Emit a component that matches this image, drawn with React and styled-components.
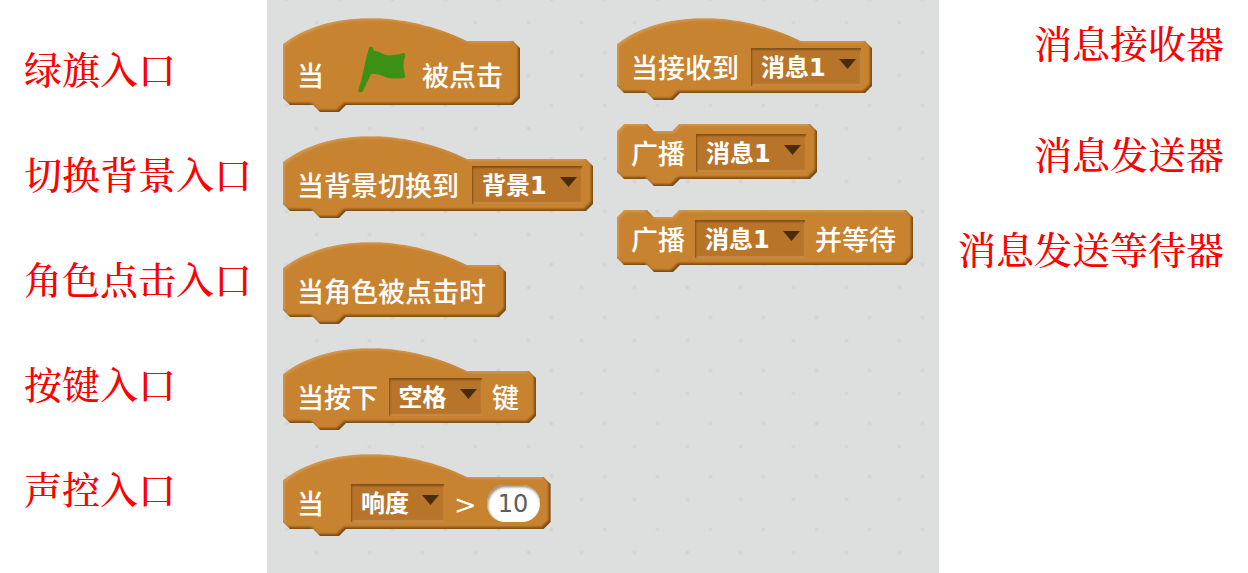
import React from "react";
import styled, { createGlobalStyle, css } from "styled-components";

const GlobalStyle = createGlobalStyle`
  * { box-sizing: border-box; }
  body {
    margin: 0;
    background: #ffffff;
    font-family: "DejaVu Sans", "Noto Sans CJK SC", sans-serif;
  }
`;

/* Outline of the curved cap, sampled from a cubic curve. */
const CAP = Array.from({ length: 33 }, (_, i) => {
  const t = i / 32;
  const u = 1 - t;
  const at = (a, b, c, d) =>
    u * u * u * a + 3 * u * u * t * b + 3 * u * t * t * c + t * t * t * d;
  return `${at(0, 44, 120, 184).toFixed(2)}px ${at(26, -8, -8, 23).toFixed(2)}px`;
}).join(", ");

const HAT_TOP = `${CAP}, calc(100% - 7px) 23px, 100% 30px`;
const STACK_TOP =
  "0 7px, 7px 0, 30px 0, 37px 7px, 55px 7px, 62px 0, calc(100% - 7px) 0, 100% 7px";
const BOTTOM =
  "100% calc(100% - 14px), calc(100% - 7px) calc(100% - 7px), 63px calc(100% - 7px), 56px 100%, 37px 100%, 30px calc(100% - 7px), 7px calc(100% - 7px), 0 calc(100% - 14px)";

const Page = styled.div`
  display: grid;
  grid-template-columns: 267px minmax(0, 1fr) 309px;
  min-height: 100vh;
`;

const Notes = styled.ul`
  list-style: none;
  margin: 0;
  display: flex;
  flex-direction: column;
  gap: ${(p) => p.$gap}px;
  padding: ${(p) => p.$top}px 24px 0;
  align-items: ${(p) => (p.$end ? "flex-end" : "flex-start")};
`;

const Note = styled.li`
  font-family: "Noto Serif CJK SC", "Noto Sans CJK SC", serif;
  font-size: 38px;
  font-weight: 500;
  line-height: 45px;
  color: #ff0000;
  white-space: nowrap;
  margin-top: ${(p) => (p.$apart ? 16 : 0)}px;
`;

const Canvas = styled.main`
  display: grid;
  grid-template-columns: 334px minmax(0, 1fr);
  padding: 18px 0 18px 16px;
  background-color: #dddfdf;
  background-image: radial-gradient(circle, #d2d4d6 1px, transparent 3px),
    radial-gradient(circle, #d2d4d6 1px, transparent 3px);
  background-size: 53px 53px;
  background-position: 23px 49px, 46px 26px;
`;

const Stack = styled.section`
  display: flex;
  flex-direction: column;
  align-items: flex-start;
  gap: 24px;
`;

const BlockRoot = styled.div`
  position: relative;
  z-index: 0;
  display: flex;
  align-items: center;
  justify-content: space-between;
  gap: 10px;
  min-width: ${(p) => p.$width}px;
  padding-left: 14px;
  padding-right: ${(p) => (p.$fieldLast ? 11 : 17)}px;
  ${(p) =>
    p.$hat
      ? css`
          height: ${p.$tall ? 94 : 82}px;
          padding-top: ${p.$tall ? 27 : 23}px;
          padding-bottom: 7px;
        `
      : css`
          height: 62px;
          padding-top: 2px;
          padding-bottom: 7px;
        `}
`;

const Shape = styled.span`
  position: absolute;
  inset: 0;
  z-index: -1;
  filter: url(#bevel);

  &::before {
    content: "";
    position: absolute;
    inset: 0;
    background: #c88330;
    clip-path: polygon(${(p) => (p.$hat ? HAT_TOP : STACK_TOP)}, ${BOTTOM});
  }
`;

const Word = styled.span`
  flex: none;
  min-width: ${(p) => (p.$wide ? 44 : 0)}px;
  padding-top: 3px;
  font-size: 27px;
  font-weight: 500;
  line-height: 27px;
  color: #ffffff;
  white-space: nowrap;
`;

const Flag = styled.svg`
  flex: none;
  width: 48px;
  height: 47px;
  margin: 0 5px 12px;
`;

const Picker = styled.span`
  position: relative;
  flex: none;
  display: flex;
  width: ${(p) => (p.$long ? 110 : 93)}px;
`;

const Select = styled.select`
  appearance: none;
  width: 100%;
  height: 38px;
  margin: 0;
  padding: 2px 24px 0 10px;
  border: 0;
  border-radius: 0;
  background: #b8752a;
  box-shadow: inset 1px 2px 2px #80501b, inset -1px -2px 1px #c58a47;
  color: #ffffff;
  font-family: inherit;
  font-size: 24px;
  font-weight: 700;
  line-height: 32px;
`;

const Caret = styled.svg`
  position: absolute;
  right: 5px;
  top: 11px;
  width: 17px;
  height: 10px;
  pointer-events: none;
`;

const NumberField = styled.input`
  flex: none;
  width: 53px;
  height: 37px;
  margin: 0;
  padding: 2px 0 0;
  border: 0;
  border-radius: 18px;
  background: #ffffff;
  box-shadow: inset 1px 2px 3px #8c8378;
  color: #5b5d60;
  font-family: inherit;
  font-size: 24px;
  text-align: center;
`;

const Defs = styled.svg`
  position: absolute;
  width: 0;
  height: 0;
`;

function BevelFilter() {
  return (
    <Defs aria-hidden="true">
      <filter id="bevel" x="-5%" y="-10%" width="110%" height="120%" colorInterpolationFilters="sRGB">
        <feGaussianBlur in="SourceAlpha" stdDeviation="1" result="soft" />
        <feOffset in="soft" dx="-2" dy="-2" result="up" />
        <feOffset in="soft" dx="2" dy="2" result="down" />
        <feFlood floodColor="#7c4a12" />
        <feComposite in2="up" operator="out" result="shade" />
        <feFlood floodColor="#d6a468" floodOpacity="0.6" />
        <feComposite in2="down" operator="out" result="light" />
        <feMerge result="edges">
          <feMergeNode in="SourceGraphic" />
          <feMergeNode in="light" />
          <feMergeNode in="shade" />
        </feMerge>
        <feComposite in="edges" in2="SourceAlpha" operator="in" />
      </filter>
    </Defs>
  );
}

function Block({ children, hat, tall, width, fieldLast }) {
  return (
    <BlockRoot $hat={hat} $tall={tall} $width={width} $fieldLast={fieldLast}>
      <Shape $hat={hat} />
      {children}
    </BlockRoot>
  );
}

function Dropdown({ value, label, long }) {
  return (
    <Picker $long={long}>
      <Select aria-label={label} defaultValue={value}>
        <option>{value}</option>
      </Select>
      <Caret viewBox="0 0 17 10" aria-hidden="true">
        <path d="M0 0H17L8.5 10Z" fill="#4a2c0b" />
      </Caret>
    </Picker>
  );
}

const ENTRIES = ["绿旗入口", "切换背景入口", "角色点击入口", "按键入口", "声控入口"];

export default function App() {
  return (
    <Page>
      <GlobalStyle />
      <BevelFilter />
      <Notes $top={45} $gap={60}>
        {ENTRIES.map((text) => (
          <Note key={text}>{text}</Note>
        ))}
      </Notes>
      <Canvas>
        <Stack>
          <Block hat tall width={237}>
            <Word $wide>当</Word>
            <Flag viewBox="0 0 48 47" role="img" aria-label="绿旗">
              <path
                d="M11 2Q12 -1 15 2L16 5C22 4 26 11 35 9Q41 9 45 7Q48 7 47 10C45 16 45 22 47 29Q48 32 45 32C38 33 31 33 25 30Q18 27 13 28L5 45Q4 47 1 46Q0 45 1 42C5 30 7 15 11 2Z"
                fill="#3c9014"
              />
            </Flag>
            <Word>被点击</Word>
          </Block>
          <Block hat width={310} fieldLast>
            <Word>当背景切换到</Word>
            <Dropdown long value="背景1" label="背景" />
          </Block>
          <Block hat width={223}>
            <Word>当角色被点击时</Word>
          </Block>
          <Block hat width={253}>
            <Word>当按下</Word>
            <Dropdown value="空格" label="按键" />
            <Word>键</Word>
          </Block>
          <Block hat width={267} fieldLast>
            <Word $wide>当</Word>
            <Dropdown value="响度" label="传感器" />
            <Word>&gt;</Word>
            <NumberField type="text" defaultValue="10" aria-label="阈值" />
          </Block>
        </Stack>
        <Stack>
          <Block hat width={255} fieldLast>
            <Word>当接收到</Word>
            <Dropdown long value="消息1" label="消息" />
          </Block>
          <Block width={200} fieldLast>
            <Word>广播</Word>
            <Dropdown long value="消息1" label="消息" />
          </Block>
          <Block width={296}>
            <Word>广播</Word>
            <Dropdown long value="消息1" label="消息" />
            <Word>并等待</Word>
          </Block>
        </Stack>
      </Canvas>
      <Notes $top={19} $gap={50} $end>
        <Note>消息接收器</Note>
        <Note $apart>消息发送器</Note>
        <Note>消息发送等待器</Note>
      </Notes>
    </Page>
  );
}
